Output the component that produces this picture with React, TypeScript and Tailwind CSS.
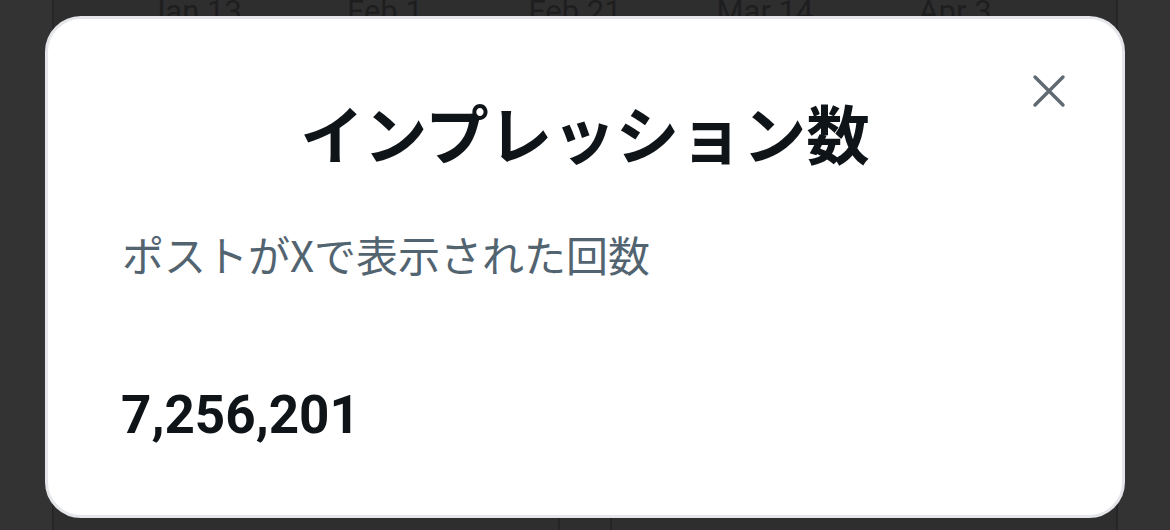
const axisLabels = ["Jan 13", "Feb 1", "Feb 21", "Mar 14", "Apr 3"];

const CloseIcon = () => (
  <svg width="34" height="34" viewBox="0 0 34 34" fill="none">
    <path d="M3 3 L31 31 M31 3 L3 31" stroke="#5f6a73" strokeWidth="3.4" strokeLinecap="round" />
  </svg>
);

const App = () => {
  return (
    <div className="relative w-[1170px] h-[530px] overflow-hidden bg-[#333334] flex font-['Noto_Sans_CJK_JP',sans-serif]">
      {/* chart panel behind the dialog */}
      <div className="ml-[52px] w-[1066px] h-full bg-[#2e2e2f] border-x-2 border-[#262627] flex flex-col">
        <div className="flex pl-[46px] -mt-[4px]">
          {axisLabels.map((label) => (
            <span
              key={label}
              className="w-[190px] text-center text-[31px] leading-none text-[#1e1e1f] font-['Roboto',sans-serif]"
            >
              {label}
            </span>
          ))}
        </div>
        <div className="mt-auto ml-[504px] w-[54px] h-[20px] border-x-2 border-[#252526]" />
      </div>

      {/* dialog */}
      <div className="absolute left-[45px] top-[16px] w-[1080px] h-[502px] rounded-[36px] bg-white border-[3px] border-[#e4e6e9] flex flex-col">
        <button className="absolute right-[56px] top-[55px] p-0">
          <CloseIcon />
        </button>
        <h2 className="mt-[74px] text-center text-[63.5px] leading-[1.2] font-semibold text-[#0f1419]">
          インプレッション数
        </h2>
        <p className="mt-[60px] ml-[74px] text-[42px] leading-[1.2] text-[#536471]">
          ポストがXで表示された回数
        </p>
        <div className="mt-[104px] ml-[73px] text-[53px] leading-[1.2] font-bold text-[#0f1419] font-['Roboto',sans-serif]">
          7,256,201
        </div>
      </div>
    </div>
  );
};

export default App;
